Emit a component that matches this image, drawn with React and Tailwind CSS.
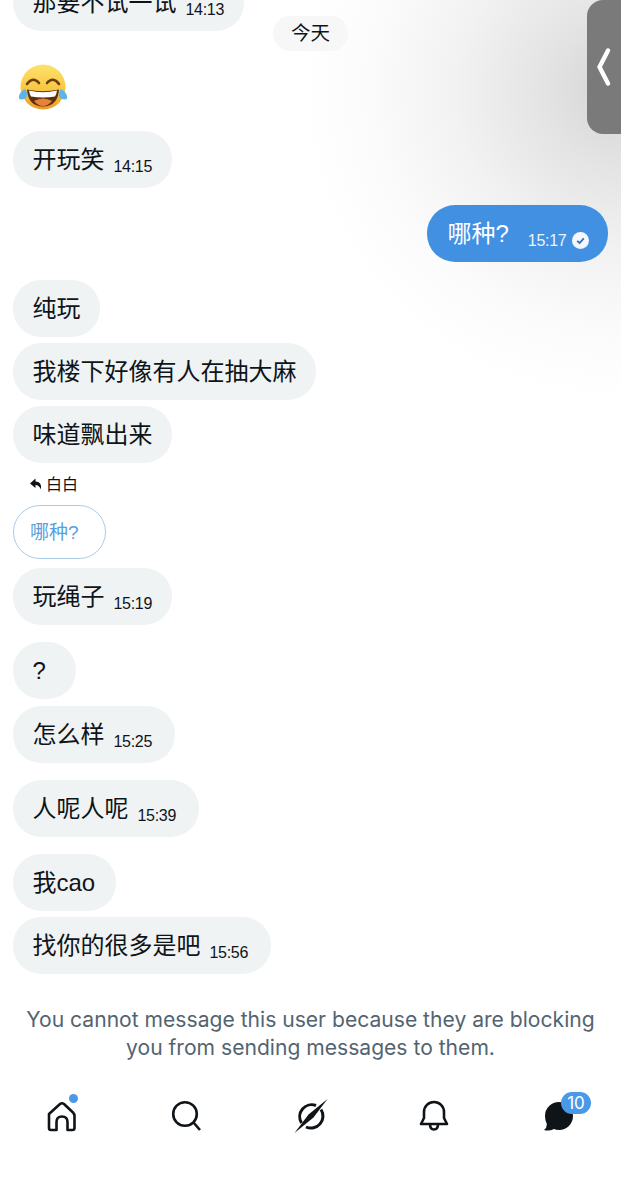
const BODY_FONT = "font-['Inter','Noto_Sans_CJK_SC',sans-serif]";
const BUBBLE_FONT = "font-['Liberation_Sans','Noto_Sans_CJK_SC',sans-serif]";

function Bubble({ text, time, className = '' }) {
  return (
    <div className={`self-start h-[57px] rounded-[28px] bg-[#eff3f4] pl-[19.5px] ${time ? 'pr-[20px]' : 'pr-[19px]'} flex items-center text-[#0f1419] ${BUBBLE_FONT} ${className}`}>
      <span className="text-[24px] leading-none whitespace-nowrap">{text}</span>
      {time && <span className="ml-[9px] mt-[14px] text-[16px] leading-none tracking-[-0.3px]">{time}</span>}
    </div>
  );
}

function LaughEmoji() {
  return (
    <svg width="50" height="46" viewBox="0 0 50 46">
      <defs>
        <linearGradient id="face" x1="0" y1="0" x2="0" y2="1">
          <stop offset="0%" stopColor="#fde26c" />
          <stop offset="65%" stopColor="#f8c23a" />
          <stop offset="100%" stopColor="#e89a26" />
        </linearGradient>
      </defs>
      <circle cx="25" cy="23" r="22.5" fill="url(#face)" />
      <path d="M9 25.5 Q25 29 41 25.5 Q40 42 25 42.5 Q10 42 9 25.5Z" fill="#5e2f0e" />
      <path d="M16 37 Q25 32 34 37 Q30 42 25 42 Q20 42 16 37Z" fill="#e8823a" />
      <path d="M11 26.5 Q25 30 39 26.5 Q38.5 30.5 37 32.5 Q25 34.5 13 32.5 Q11.5 30.5 11 26.5Z" fill="#fff" />
      <path d="M9 20 Q15 12 21 19" fill="none" stroke="#6b3e10" strokeWidth="2.6" strokeLinecap="round" />
      <path d="M29 19 Q35 12 41 20" fill="none" stroke="#6b3e10" strokeWidth="2.6" strokeLinecap="round" />
      <path d="M7 25 Q11 30 8 34 Q0 38 1 32 Q2 28 7 25Z" fill="#5cb4ee" />
      <path d="M43 25 Q39 30 42 34 Q50 38 49 32 Q48 28 43 25Z" fill="#5cb4ee" />
    </svg>
  );
}

function NavBar() {
  return (
    <nav className="mt-[34px] h-[40px] pl-[47px] flex items-center text-[#0f1419]">
      <div className="relative w-[30px] h-[32px]">
        <svg width="30" height="32" viewBox="0 0 30 32" fill="none" stroke="currentColor" strokeWidth="2.6" strokeLinejoin="round">
          <path d="M2 14 L13 4 Q15 2.5 17 4 L26 12.5 Q27.5 14 27.5 16 L27.5 28 Q27.5 30 25.5 30 L20.5 30 L20.5 22 Q20.5 16.5 15 16.5 Q9.5 16.5 9.5 22 L9.5 30 L4 30 Q2 30 2 28 Z" />
        </svg>
        <span className="absolute -top-[6px] right-[-1px] w-[9px] h-[9px] rounded-full bg-[#4a99e9]" />
      </div>
      <svg className="ml-[94px]" width="32" height="32" viewBox="0 0 32 32" fill="none" stroke="currentColor" strokeWidth="2.6">
        <circle cx="14" cy="14" r="11.8" />
        <path d="M22.5 22.5 L29 30" />
      </svg>
      <svg className="ml-[91px]" width="34" height="36" viewBox="0 0 34 36" fill="none">
        <path d="M22 7.5 A12 12 0 0 0 7.5 25" stroke="currentColor" strokeWidth="3" />
        <path d="M27 11.5 A12 12 0 0 1 12 29" stroke="currentColor" strokeWidth="3" />
        <path d="M33.5 1 L19.5 19.5 L0.5 35 L14.5 16.5 Z" fill="currentColor" />
      </svg>
      <svg className="ml-[91px]" width="30" height="32" viewBox="0 0 30 32" fill="none" stroke="currentColor" strokeWidth="2.6" strokeLinejoin="round">
        <path d="M2 24 L28 24 L25 18 L25 12 A10 10 0 0 0 5 12 L5 18 Z" />
        <path d="M11 24 Q11 29.5 15 29.5 Q19 29.5 19 24" />
      </svg>
      <div className="relative ml-[95px] w-[30px] h-[30px]">
        <svg width="30" height="30" viewBox="0 0 30 30" fill="currentColor">
          <path d="M15 1 A14 14 0 0 1 15 29 Q12 29 10 28 Q5 30.5 0 29 Q3 27 2.8 23 Q1 19.5 1 15 A14 14 0 0 1 15 1Z" />
        </svg>
        <span className="absolute -top-[9px] left-[17px] w-[30px] h-[22px] rounded-full bg-[#4a99e9] text-white text-[17px] leading-[22px] text-center">10</span>
      </div>
    </nav>
  );
}

export default function App() {
  return (
    <div className={`relative w-[621px] h-[1200px] overflow-hidden bg-white ${BODY_FONT}`}>
      {/* shadow of the side handle */}
      <div className="absolute top-0 right-0 w-[340px] h-[420px] bg-[radial-gradient(ellipse_320px_310px_at_100%_90px,#d4d4d4_0%,#e4e4e4_25%,#f2f2f2_52%,#fbfbfb_78%,#ffffff_100%)]" />
      <div className="absolute top-0 right-0 w-[34px] h-[134px] rounded-l-[16px] bg-[#7a7a7a] flex items-start pt-[48px] pl-[10px]">
        <svg width="14" height="38" viewBox="0 0 14 38" fill="none" stroke="#fff" strokeWidth="4.4" strokeLinecap="round" strokeLinejoin="round">
          <path d="M11 2.5 L2.5 19 L11 35.5" />
        </svg>
      </div>

      <div className="relative flex flex-col px-[13px] mt-[-26px]">
        <Bubble text="那要不试一试" time="14:13" className="w-[231px]" />
        <div className="self-start mt-[-15px] ml-[260px] h-[35px] w-[75px] rounded-full bg-[#f7f7f7] text-[#0f1419] text-[19.5px] leading-[35px] text-center">今天</div>
        <div className="mt-[13px] ml-[5px]"><LaughEmoji /></div>
        <Bubble text="开玩笑" time="14:15" className="mt-[21px] w-[159px]" />

        <div className={`self-end mt-[17px] h-[57px] w-[181px] rounded-[28px] bg-[#4290e2] pl-[20.5px] flex items-center text-white ${BUBBLE_FONT}`}>
          <span className="text-[24px] leading-none">哪种?</span>
          <span className="ml-[19px] mt-[14px] text-[16px] leading-none tracking-[-0.3px] opacity-90">15:17</span>
          <svg className="ml-[6px] mt-[14px]" width="17" height="17" viewBox="0 0 17 17">
            <circle cx="8.5" cy="8.5" r="8.5" fill="#f4f7fb" />
            <path d="M5.2 8.8 L7.6 11 L11.8 6.3" fill="none" stroke="#2f6fb5" strokeWidth="1.8" />
          </svg>
        </div>

        <Bubble text="纯玩" className="mt-[18px]" />
        <Bubble text="我楼下好像有人在抽大麻" className="mt-[6px]" />
        <Bubble text="味道飘出来" className="mt-[6px] w-[159px]" />

        <div className="mt-[11px] h-[20px] ml-[17px] flex items-center gap-[4px] text-[#0f1419] text-[16px]">
          <svg width="12" height="12" viewBox="0 0 12 12" fill="currentColor">
            <path d="M5.5 0.5 L0 5.5 L5.5 10 L5.5 7 Q9 7 11 11.5 Q12 3.5 5.5 3.5 Z" />
          </svg>
          <span>白白</span>
        </div>
        <div className={`self-start mt-[11px] h-[54px] w-[93px] rounded-[27px] border border-[#a9cbe6] pl-[16px] pt-[2px] flex items-center text-[#5a9fdc] text-[19px] ${BUBBLE_FONT}`}>哪种?</div>

        <Bubble text="玩绳子" time="15:19" className="mt-[9px] w-[159px]" />
        <Bubble text="?" className="mt-[17px] w-[63px]" />
        <Bubble text="怎么样" time="15:25" className="mt-[7px] w-[162px]" />
        <Bubble text="人呢人呢" time="15:39" className="mt-[17px] w-[186px]" />
        <Bubble text="我cao" className="mt-[17px] w-[103px]" />
        <Bubble text="找你的很多是吧" time="15:56" className="mt-[6px] w-[258px]" />

        <p className="mt-[32px] -mx-[13px] text-center text-[#536471] text-[21.1px] leading-[28px]">
          You cannot message this user because they are blocking<br />
          you from sending messages to them.
        </p>
      </div>
      <div className="relative"><NavBar /></div>
    </div>
  );
}
